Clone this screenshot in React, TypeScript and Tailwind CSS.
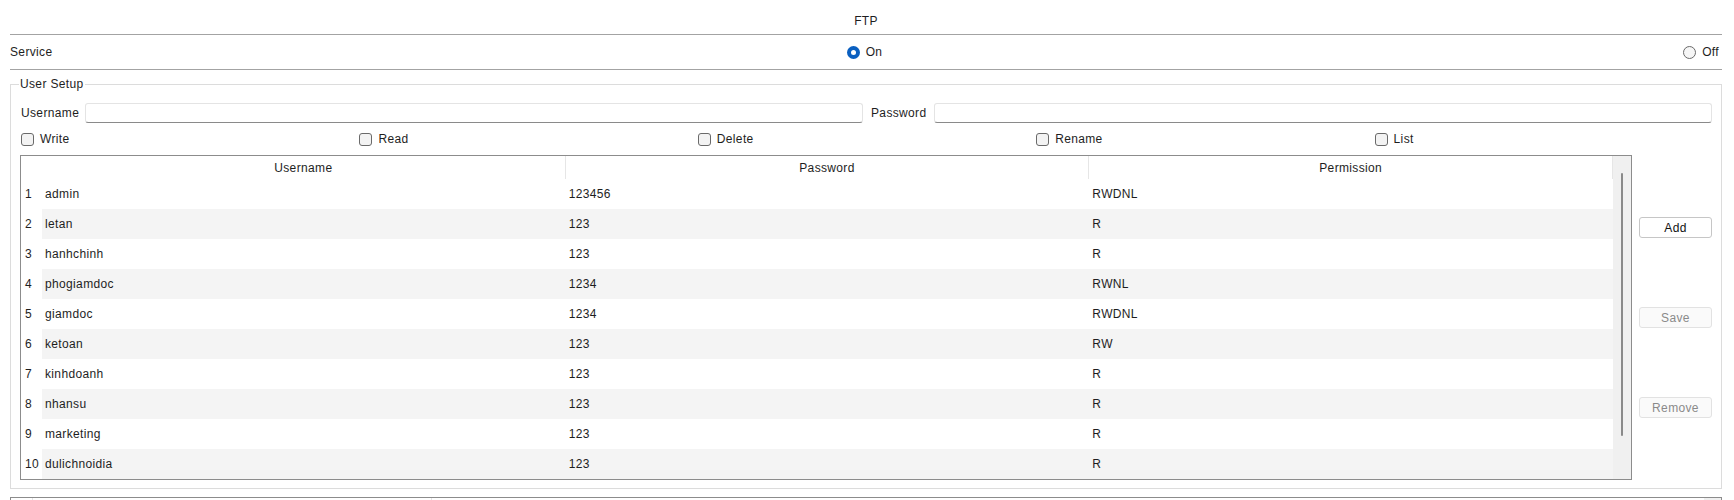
import React from "react";

const rows = [
  ["admin", "123456", "RWDNL"],
  ["letan", "123", "R"],
  ["hanhchinh", "123", "R"],
  ["phogiamdoc", "1234", "RWNL"],
  ["giamdoc", "1234", "RWDNL"],
  ["ketoan", "123", "RW"],
  ["kinhdoanh", "123", "R"],
  ["nhansu", "123", "R"],
  ["marketing", "123", "R"],
  ["dulichnoidia", "123", "R"],
];

function Checkbox({ label }: { label: string }) {
  return (
    <div className="flex items-center gap-[6px] pl-[1px]">
      <span className="block w-[13px] h-[13px] rounded-[3px] border border-[#6a6a6a] bg-[#f3f3f3]" />
      <span>{label}</span>
    </div>
  );
}

function Radio({ checked, label }: { checked: boolean; label: string }) {
  return (
    <div className="flex items-center gap-[6px]">
      {checked ? (
        <span className="flex items-center justify-center w-[13px] h-[13px] rounded-full bg-[#0a5fc0]">
          <span className="block w-[5px] h-[5px] rounded-full bg-white" />
        </span>
      ) : (
        <span className="block w-[13px] h-[13px] rounded-full border border-[#6a6a6a] bg-[#f6f6f6]" />
      )}
      <span>{label}</span>
    </div>
  );
}

function Btn({ label, disabled }: { label: string; disabled?: boolean }) {
  return (
    <div
      className={
        disabled
          ? "h-[21px] w-full flex items-center justify-center rounded-[3px] border border-[#e2e2e2] bg-[#fafafa] text-[#8a8a8a]"
          : "h-[21px] w-full flex items-center justify-center rounded-[3px] border border-[#c6c6c6] bg-white text-[#111]"
      }
    >
      {label}
    </div>
  );
}

export default function App() {
  return (
    <div
      className="w-full bg-white text-[12px] tracking-[0.35px] text-[#1e1e1e] leading-[14px] pl-[10px] pr-[12px]"
      style={{ fontFamily: '"Liberation Sans", Arial, sans-serif' }}
    >
      {/* Title */}
      <div className="h-[35px] pt-[14px] text-center border-b border-[#a3a3a3]">FTP</div>

      {/* Service */}
      <div className="h-[35px] grid grid-cols-[1fr_auto_1fr] items-center border-b border-[#a3a3a3]">
        <div>Service</div>
        <div className="-ml-[3px]">
          <Radio checked label="On" />
        </div>
        <div className="flex justify-end pr-[3px]">
          <Radio checked={false} label="Off" />
        </div>
      </div>

      {/* User Setup */}
      <div className="mt-[14px] border border-[#dcdcdc] pl-[9px] pr-[9px] pb-[8px]">
        <div className="-mt-[8px] -ml-[1px] w-fit bg-white px-[1px] leading-[14px]">User Setup</div>

        <div className="mt-[12px] flex items-center h-[20px]">
          <div className="w-[65px] shrink-0 pl-[1px]">Username</div>
          <div className="flex-1 h-[20px] rounded-[3px] border border-[#e4e4e4] border-b-[#8a8a8a] bg-white" />
          <div className="w-[71px] shrink-0 pl-[8px]">Password</div>
          <div className="flex-1 h-[20px] rounded-[3px] border border-[#e4e4e4] border-b-[#8a8a8a] bg-white" />
        </div>

        <div className="mt-[8px] h-[16px] grid grid-cols-5 items-center">
          <Checkbox label="Write" />
          <Checkbox label="Read" />
          <Checkbox label="Delete" />
          <Checkbox label="Rename" />
          <Checkbox label="List" />
        </div>

        <div className="mt-[8px] flex gap-[7px]">
          {/* Table */}
          <div className="flex-1 flex border border-[#8c8c8c]">
            <div className="flex-1 flex flex-col">
              <div className="h-[23px] flex bg-white">
                <div className="w-[21px] shrink-0" />
                <div className="flex-1 flex items-center justify-center border-r border-[#e6e6e6]">Username</div>
                <div className="flex-1 flex items-center justify-center border-r border-[#e6e6e6]">Password</div>
                <div className="flex-1 flex items-center justify-center border-r border-[#e6e6e6]">Permission</div>
              </div>
              {rows.map((r, i) => (
                <div key={i} className="h-[30px] flex">
                  <div className="w-[21px] shrink-0 flex items-center pl-[4px] bg-white">{i + 1}</div>
                  <div className={"flex-1 flex " + (i % 2 === 1 ? "bg-[#f4f4f4]" : "bg-white")}>
                    <div className="flex-1 flex items-center pl-[3px]">{r[0]}</div>
                    <div className="flex-1 flex items-center pl-[3px]">{r[1]}</div>
                    <div className="flex-1 flex items-center pl-[3px]">{r[2]}</div>
                  </div>
                </div>
              ))}
            </div>
            <div className="w-[18px] shrink-0 bg-[#f0f0f0] pt-[17px]">
              <div className="ml-[8px] w-[2px] h-[263px] rounded-full bg-[#8a8a8a]" />
            </div>
          </div>

          {/* Buttons */}
          <div className="w-[73px] shrink-0 flex flex-col justify-center gap-[69px]">
            <Btn label="Add" />
            <Btn label="Save" disabled />
            <Btn label="Remove" disabled />
          </div>
        </div>
      </div>

      {/* Next panel */}
      <div className="mt-[8px] h-[30px] flex border border-[#8c8c8c]">
        <div className="w-[22px] border-r border-[#e6e6e6]" />
        <div className="w-[399px] border-r border-[#e6e6e6]" />
        <div className="flex-1" />
        <div className="w-[17px] bg-[#f0f0f0]" />
      </div>
    </div>
  );
}
